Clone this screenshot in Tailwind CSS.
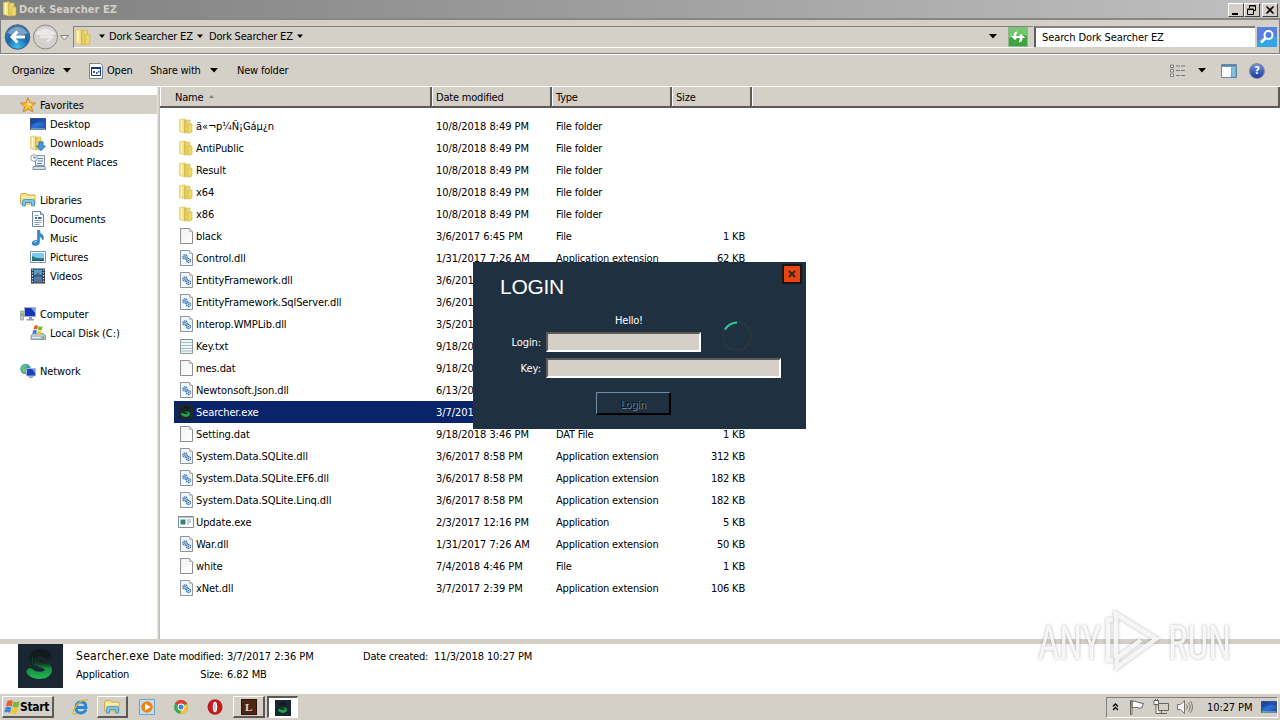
<!DOCTYPE html>
<html lang="en">

<head>
    <meta charset="UTF-8">
    <meta name="viewport" content="width=device-width, initial-scale=1.0">
    <script src="https://cdn.jsdelivr.net/npm/@tailwindcss/browser@4"></script>
    <title>Dork Searcher EZ</title>
</head>

<body class="relative w-[1280px] h-[720px] overflow-hidden bg-[#d4d0c8] font-['DejaVu_Sans_Condensed','DejaVu_Sans',sans-serif] font-stretch-condensed text-[11px] leading-[14px] tracking-[-0.2px] text-black flex flex-col whitespace-nowrap">

    <!-- Icons -->
    <svg class="absolute w-0 h-0">
        <defs>
            <linearGradient id="gold" x1="0" x2="1">
                <stop offset="0" stop-color="#f8eda0" />
                <stop offset=".5" stop-color="#dfc252" />
                <stop offset=".6" stop-color="#f6e68a" />
                <stop offset="1" stop-color="#e3c850" />
            </linearGradient>
            <linearGradient id="blue" x1="0" y1="0" x2="1" y2="1">
                <stop offset="0" stop-color="#153f9c" />
                <stop offset=".5" stop-color="#2f74d8" />
                <stop offset="1" stop-color="#1b4ca4" />
            </linearGradient>
            <linearGradient id="page" x1="0" y1="0" x2="1" y2="1">
                <stop offset="0" stop-color="#f1f1f1" />
                <stop offset="1" stop-color="#fff" />
            </linearGradient>
            <radialGradient id="back" cx=".5" cy=".9" r=".9">
                <stop offset="0" stop-color="#3fc0ee" />
                <stop offset=".5" stop-color="#1768ad" />
                <stop offset="1" stop-color="#4a7ba8" />
            </radialGradient>
            <linearGradient id="glow" gradientUnits="userSpaceOnUse" x1="0" y1="8" x2="0" y2="36">
                <stop offset="0" stop-color="#10181d" />
                <stop offset=".4" stop-color="#13241f" />
                <stop offset=".62" stop-color="#178a40" />
                <stop offset="1" stop-color="#20b850" />
            </linearGradient>
        </defs>
        <symbol id="folder" viewBox="0 0 16 16">
            <path d="M1.500 1.500 7 .8V15l-5.500-1.500z" fill="#f3e38a" stroke="#d9c56b" stroke-width=".6" />
            <path d="M6.500 2H12v12.500L6.500 15z" fill="url(#gold)" stroke="#d0b850" stroke-width=".6" />
            <path d="M10 6h4v8l-3 1.200-1-.7z" fill="#efd866" stroke="#cfb646" stroke-width=".6" />
            <path d="M7 2v12.500" stroke="#c1a440" stroke-width=".8" />
            <path d="M3.500 2.500v10" stroke="#fffbd8" />
        </symbol>
        <symbol id="file" viewBox="0 0 16 16">
            <path d="M2.500.5h9l3 3v12h-12z" fill="url(#page)" stroke="#8f8f8f" />
            <path d="M11.500.5v3h3" fill="#ddd" stroke="#aaa" stroke-width=".8" />
        </symbol>
        <symbol id="dll" viewBox="0 0 16 16">
            <path d="M2.500.5h9l3 3v12h-12z" fill="#f1f7fb" stroke="#8f9499" />
            <path d="M11.500.5v3h3" fill="#dde" stroke="#aab" stroke-width=".8" />
            <circle cx="7" cy="7" r="2.200" fill="#c3daf0" stroke="#3f74b0" stroke-width="1.300" stroke-dasharray="1.400 .6" />
            <circle cx="7" cy="7" r=".7" fill="#20508c" />
            <circle cx="10.500" cy="10.500" r="2" fill="#dcebf8" stroke="#3f74b0" stroke-width="1.300" stroke-dasharray="1.400 .5" />
            <circle cx="10.500" cy="10.500" r=".6" fill="#20508c" />
        </symbol>
        <symbol id="txt" viewBox="0 0 16 16">
            <path d="M2.500 1.500h12v14h-12z" fill="#eff5f6" stroke="#8f9a9a" />
            <path d="M3 4.500h11M3 7.500h11M3 10.500h11M3 13h11" stroke="#a3bfc5" />
            <path d="M3 1.500h11" stroke="#777" stroke-dasharray="1 1" />
        </symbol>
        <symbol id="exe" viewBox="0 0 16 16">
            <path d="M.5 2.500h15v11H.5z" fill="#fff" stroke="#7e8c93" />
            <path d="M1 3.500h14" stroke="#b6c4cc" />
            <path d="M2.500 5.500h5v5h-5z" fill="#2f8a74" />
            <path d="M9 6h4M9 8h4M9 10h2" stroke="#8fa2b8" />
        </symbol>
        <symbol id="logo" viewBox="0 0 46 46">
            <rect width="46" height="46" fill="#1a2733" />
            <path d="M30.500 12.500C27 8 15 8 15 14.500 15 21 31 19.500 31 27c0 7-14 7.500-18.500 2" fill="none" stroke="url(#glow)" stroke-width="7.500" stroke-linecap="round" />
            <path d="M15 14v6M18 15v6M21 16v5M24 18v4" stroke="#1c4a30" stroke-width=".8" />
        </symbol>
        <symbol id="star" viewBox="0 0 16 16">
            <path d="M8 .7l2.100 5 5.400.4-4.100 3.500 1.300 5.300L8 12l-4.700 2.900 1.300-5.300L.5 6.100l5.400-.4z" fill="#fbbf30" stroke="#cd8524" />
            <path d="M8 3l1.300 3.600 3 .3L8 9z" fill="#fff09a" />
        </symbol>
        <symbol id="desktop" viewBox="0 0 16 16">
            <path d="M.5 2.500h15v11H.5z" fill="url(#blue)" stroke="#36507c" />
            <path d="M1 9Q7 5 15 7V3H1z" fill="#173f97" opacity=".6" />
            <path d="M1 13h14" stroke="#a9bfd9" />
            <path d="M1 13h3" stroke="#42bd58" />
        </symbol>
        <symbol id="downloads" viewBox="0 0 16 16">
            <use href="#folder" x="-1" width="16" height="16" />
            <path d="M9 7h4v4h2.500L11 15.700 6.500 11H9z" fill="#3f9ce2" stroke="#1d6bb5" stroke-width=".8" />
        </symbol>
        <symbol id="recent" viewBox="0 0 16 16">
            <path d="M5.500 1.500h9v10h-9z" fill="#e8eef2" stroke="#7f93a3" />
            <path d="M3 12.500h12l.5 3H3z" fill="#d5e0e8" stroke="#7f93a3" />
            <path d="M8 4.500h5M8 7h5M7 9.500h5" stroke="#5888ac" />
            <circle cx="4" cy="4" r="3.300" fill="#fff" stroke="#8da0ad" />
            <path d="M4 2v2h2" fill="none" stroke="#456" stroke-width=".8" />
        </symbol>
        <symbol id="libraries" viewBox="0 0 16 16">
            <path d="M.5 3l1-1.500h5L8 3h7v9H.5z" fill="#f5e28a" stroke="#c9ab47" />
            <path d="M1 5h14" stroke="#fff7c4" />
            <path d="M2.500 14V9.500q0-2 2-2h8q2 0 2 2V14h-3v-3.500h-6V14z" fill="#7cc4ec" stroke="#3f8bbb" stroke-width=".8" />
        </symbol>
        <symbol id="documents" viewBox="0 0 16 16">
            <path d="M2.500.5h8l3 3v12h-11z" fill="#fff" stroke="#6d87a1" />
            <path d="M10.500.5v3h3" fill="#cde" stroke="#6d87a1" />
            <path d="M4.500 4.500h4M4.500 9.500h7M4.500 11.500h7M4.500 13.500h5" stroke="#89a1bd" />
            <path d="M5 6h2v2H5zM8 6h3.500v2H8z" fill="#2f6ab0" />
        </symbol>
        <symbol id="music" viewBox="0 0 16 16">
            <path d="M7.500 0h2q0 3 2.500 4.500T13 10q-1-3-3.500-3.500V12q0 3.500-4 3.500-3.500 0-3.500-2.500t5.500-3z" fill="#338fd4" stroke="#2269ab" stroke-width=".5" />
            <path d="M4 12.500q1-1.300 3-1.200" stroke="#a7dbfa" fill="none" />
        </symbol>
        <symbol id="pictures" viewBox="0 0 16 16">
            <path d="M.5 2.500h15v11H.5z" fill="#fff" stroke="#7e93a5" />
            <path d="M2 4h12v8H2z" fill="#7cc8f0" />
            <path d="M2 7q5 3 12 2v3H2z" fill="#257a7c" />
            <path d="M2 11h12v1H2z" fill="#1c4f7c" />
        </symbol>
        <symbol id="videos" viewBox="0 0 16 16">
            <path d="M1 .5h14v15H1z" fill="#2d3a45" />
            <path d="M4 1.500h8v5.800H4z" fill="#4aa0d8" />
            <path d="M4 8.300h8v6.200H4z" fill="#417fc0" />
            <path d="M5 7l3-3 3 3zM5 14l2-4 4 4z" fill="#7c6a62" />
            <path d="M2.500 1.500v14M13.500 1.500v14" stroke="#dde6ec" stroke-width="1.300" stroke-dasharray="1.300 1.500" />
        </symbol>
        <symbol id="computer" viewBox="0 0 16 16">
            <path d="M.5 5h3v9h-3z" fill="#c5ccd0" stroke="#83909a" stroke-width=".7" />
            <path d="M1 7h2v3H1z" fill="#6bbf58" />
            <path d="M4.500 1.500h11v9h-11z" fill="#1834bb" stroke="#a7b2c4" />
            <path d="M11 2h4v5z" fill="#7e9af0" />
            <path d="M9 11h3v2h2v1.500H6.500V13H9z" fill="#8e9cac" />
        </symbol>
        <symbol id="winflag" viewBox="0 0 16 16">
            <path d="M3.500 2Q6 .5 8.800 2L7.600 7.400Q5 6 2 7.300z" fill="#ee5a24" />
            <path d="M9.600 2.500q2.600 1.300 6 0l-1.400 5.400Q11.200 9 8.400 7.800z" fill="#72b836" />
            <path d="M1.700 8.300Q4.500 7.200 7.300 8.400L6 13.700Q3 12.300.2 13.600z" fill="#3d86db" />
            <path d="M8.200 8.800q2.800 1.200 5.700.2l-1.400 5.200Q9.700 15.300 6.900 14.100z" fill="#fac421" />
        </symbol>
        <symbol id="disk" viewBox="0 0 16 16">
            <path d="M1 10.500l2-2h10l2.500 2v4H1z" fill="#b8c7cf" stroke="#748a96" stroke-width=".8" />
            <path d="M2 12.500h8" stroke="#e4ecef" />
            <path d="M12 12.500h2" stroke="#38a94a" stroke-width="1.500" />
            <use href="#winflag" x="2" y="-.5" width="11" height="11" />
        </symbol>
        <symbol id="network" viewBox="0 0 16 16">
            <circle cx="5.500" cy="6" r="5.200" fill="#3496cb" />
            <path d="M2 3q4-3 6-1L5 5l2 3-3 3Q1 8 1 5z" fill="#68c077" />
            <path d="M6.500 5.500h9v7.500h-9z" fill="#1c3fc6" stroke="#a9b9d0" />
            <path d="M12 6h3v4z" fill="#7e9af0" />
            <path d="M9 13.500h4v1.500H9z" fill="#8798aa" />
        </symbol>
    </svg>

    <!-- Title bar -->
    <header class="h-[18px] shrink-0 flex items-center pl-0.5 pr-0.5 bg-linear-to-r from-[#808080] to-[#c0c0c0]">
        <svg class="size-4 mr-px"><use href="#folder" /></svg>
        <span class="font-bold text-[#d4d0c8] tracking-[0.05px] pt-px">Dork Searcher EZ</span>
        <div class="ml-auto flex mt-px">
            <div class="w-4 h-[14px] bg-[#d4d0c8] border border-t-white border-l-white border-b-[#404040] border-r-[#404040]">
                <svg viewBox="0 0 14 12" class="w-3.5 h-3"><path d="M3 9h6v2H3z" /></svg>
            </div>
            <div class="w-4 h-[14px] bg-[#d4d0c8] border border-t-white border-l-white border-b-[#404040] border-r-[#404040] mr-0.5">
                <svg viewBox="0 0 14 12" class="w-3.5 h-3" fill="none" stroke="#000"><path d="M4.500 4V1.500h6v5H9M4.500 2h6M2.500 5h6v5.500h-6zM2.500 5.500h6" /></svg>
            </div>
            <div class="w-4 h-[14px] bg-[#d4d0c8] border border-t-white border-l-white border-b-[#404040] border-r-[#404040]">
                <svg viewBox="0 0 14 12" class="w-3.5 h-3" stroke="#000" stroke-width="1.600"><path d="M3.500 2.500l7 7M10.500 2.500l-7 7" /></svg>
            </div>
        </div>
    </header>

    <!-- Address bar -->
    <nav class="h-[36px] shrink-0 flex items-center border-t-2 border-t-[#8a8781] border-b border-b-[#808080] border-l border-l-[#808080] border-r border-r-[#808080] pl-[3px]">
        <svg class="w-[66px] h-[28px] shrink-0" viewBox="0 0 66 28">
            <circle cx="13.500" cy="14" r="12.300" fill="url(#back)" stroke="#4c6477" />
            <path d="M3 10Q13-2 24 10q-10 5-21 0z" fill="#fff" opacity=".35" />
            <path d="M13.500 8.500L8 14l5.500 5.500M8.500 14H21" fill="none" stroke="#fff" stroke-width="3" />
            <circle cx="41.500" cy="14" r="12" fill="#d3d1ce" stroke="#8b8985" />
            <path d="M31 11Q41 0 52 11q-10 4-21 0z" fill="#fff" opacity=".5" />
            <path d="M43 9l5 5-5 5M36 14h11" fill="none" stroke="#e8e6e3" stroke-width="2.500" />
            <path d="M56.500 12.500h8L60.500 17z" fill="#eee" stroke="#88857f" />
        </svg>
        <div class="ml-[3px] w-[960px] h-[22px] flex items-center border-t border-l border-[#808080] border-b border-b-white">
            <svg class="size-[18px] mr-1"><use href="#folder" /></svg>
            <svg class="w-2 h-[5px] mx-0.5" viewBox="0 0 8 5"><path d="M1 .5h6L4 4z" /></svg>
            <span class="w-[84px] ml-px">Dork Searcher EZ</span>
            <svg class="w-2 h-[5px] mx-[3px]" viewBox="0 0 8 5"><path d="M1 .5h6L4 4z" /></svg>
            <span class="w-[84px] ml-[2px]">Dork Searcher EZ</span>
            <svg class="w-2 h-[5px] mx-[3px]" viewBox="0 0 8 5"><path d="M1 .5h6L4 4z" /></svg>
            <svg class="ml-auto mr-[36px] w-2 h-[5px]" viewBox="0 0 8 5"><path d="M0 0h8L4 4.500z" /></svg>
        </div>
        <svg class="ml-[-25px] w-5 h-5" viewBox="0 0 20 20">
            <path d="M.5.500h19v19H.5z" fill="#3da442" stroke="#8fb98c" />
            <path d="M1 1h18v8Q10 6 1 11z" fill="#8bd57f" opacity=".7" />
            <path d="M9 4.500Q5.500 5 5.500 9H2.700L7 13l4-4H8.300Q8 7 9 6zM11 15.500Q14.500 15 14.500 11h2.800L13 7 9 11h2.700q.3 2-.7 3z" fill="#fff" />
        </svg>
        <div class="ml-1.5 w-[221px] h-[21px] bg-white border-t-2 border-l-2 border-t-[#808080] border-l-[#606060] flex items-center pl-1.5 tracking-[-0.1px]">Search Dork Searcher EZ</div>
        <svg class="ml-[2px] w-5 h-5" viewBox="0 0 20 20">
            <rect width="20" height="20" rx="1" fill="#4d83dd" />
            <path d="M0 10h20v10H0z" fill="#35a5e8" />
            <path d="M0 0h20v6Q10 9 0 14z" fill="#5a7fe0" />
            <circle cx="11.500" cy="8" r="4" fill="#4a7fe0" stroke="#fff" stroke-width="2" />
            <path d="M8.500 11L4 15.500" stroke="#fff" stroke-width="2.600" />
        </svg>
    </nav>

    <!-- Toolbar -->
    <div class="h-[32px] shrink-0 flex items-center border-t border-t-white pl-3 pr-[15px]">
        <span class="w-[43px]">Organize</span>
        <svg class="ml-2 w-2 h-[5px]" viewBox="0 0 8 5"><path d="M0 0h8L4 4.500z" /></svg>
        <svg class="ml-[17px] mr-[3px] w-4 h-4" viewBox="0 0 16 16">
            <path d="M1.500.5h11l2 2v13h-13z" fill="#fff" stroke="#7b8793" />
            <path d="M3.500 4.500h9v8h-9z" fill="#fff" stroke="#123a8c" />
            <path d="M3 5h10" stroke="#123a8c" stroke-width="2" />
            <path d="M5 8h2v2H5zM8 9h1.500v2H8zM10 8h1.500v1.500H10z" fill="#31599c" />
        </svg>
        <span class="w-[27px]">Open</span>
        <span class="ml-4 w-[52px]">Share with</span>
        <svg class="ml-2 w-2 h-[5px]" viewBox="0 0 8 5"><path d="M0 0h8L4 4.500z" /></svg>
        <span class="ml-[19px]">New folder</span>
        <svg class="ml-auto w-4 h-[14px]" viewBox="0 0 16 14" fill="none">
            <path d="M.5 1h3v2.500h-3zM.5 5.500h3V8h-3zM.5 10h3v2.500h-3z" fill="#fff" stroke="#777" />
            <path d="M6 2h4M11 2h4M6 6.500h4M11 6.500h4M6 11.500h4M11 11.500h4" stroke="#6c7a88" />
        </svg>
        <svg class="ml-3 w-2 h-[5px]" viewBox="0 0 8 5"><path d="M0 0h8L4 4.500z" /></svg>
        <svg class="ml-[15px] w-4 h-[14px]" viewBox="0 0 17 15">
            <path d="M.5.500h16v14H.5z" fill="#fff" stroke="#5c7c9c" />
            <path d="M1 2h15" stroke="#4f83b0" stroke-width="2" />
            <path d="M11 4h5v10h-5z" fill="#85c3e2" stroke="#4f83b0" stroke-width=".7" />
        </svg>
        <div class="ml-3 size-4 rounded-full bg-linear-to-b from-[#6d8fdb] to-[#1c3a9e] border border-[#7e8aa0] text-white leading-[14px] font-bold text-center tracking-normal">?</div>
    </div>

    <main class="h-[553px] shrink-0 flex border-t border-t-white">
        <!-- Navigation pane -->
        <aside id="tree" class="w-[157px] bg-white pt-2 shrink-0"></aside>
        <div class="w-[3px] shrink-0 border-l border-l-[#e4e2dc] border-r border-r-[#c0bdb6]"></div>

        <!-- File list -->
        <section class="grow bg-white">
            <div class="h-[21px] flex items-center bg-[#d4d0c8] border-b-2 border-b-[#5c5a56] *:h-[19px] *:leading-[22px] *:border-r-2 *:border-r-[#5c5a56] *:border-l *:border-l-white">
                <div class="w-[272px] pl-3.5 flex">Name<svg class="ml-1.5 mt-2 w-[5px] h-[3px]" viewBox="0 0 5 3"><path d="M0 3h5L2.500 0z" fill="#85827c" /></svg></div>
                <div class="w-[120px] pl-[3px]">Date modified</div>
                <div class="w-[120px] pl-[3px]">Type</div>
                <div class="w-[80px] pl-[3px]">Size</div>
                <div class="grow"></div>
            </div>
            <div id="files" class="pt-[7px] pl-3.5"></div>
        </section>
    </main>

    <!-- Details pane -->
    <section class="h-[54px] shrink-0 bg-white border-t-[5px] border-t-[#d4d0c8] flex pl-[18px]">
        <svg class="w-[45px] h-[44px] mr-[13px]" viewBox="0 0 46 46" preserveAspectRatio="none"><use href="#logo" /></svg>
        <div class="w-[77px] pt-[4px]">
            <div class="text-[12px] leading-[17px] tracking-[0.3px]">Searcher.exe</div>
            <div class="mt-0.5 leading-[16px]">Application</div>
        </div>
        <div class="pt-[4px] w-[210px] leading-[17px] grid grid-cols-[70px_1fr] gap-x-[4px] gap-y-[1px] content-start">
            <div class="text-right">Date modified:</div>
            <div class="tracking-[-0.05px]">3/7/2017 2:36 PM</div>
            <div class="text-right">Size:</div>
            <div class="tracking-[-0.1px]">6.82 MB</div>
        </div>
        <div class="pt-[4px] leading-[17px] flex gap-[5px]">
            <div class="w-[66px]">Date created:</div>
            <div class="tracking-[-0.1px]">11/3/2018 10:27 PM</div>
        </div>
    </section>

    <!-- Taskbar -->
    <footer class="grow flex items-center border-t border-t-white pl-0.5 pr-0.5">
        <div class="w-[52px] h-[22px] flex items-center pl-px bg-[#d4d0c8] border border-t-white border-l-white border-b-2 border-r-2 border-b-[#5c5a56] border-r-[#5c5a56]">
            <svg class="w-4 h-4"><use href="#winflag" /></svg>
            <span class="font-bold text-[12px] tracking-[-0.3px]">Start</span>
        </div>
        <div class="w-[42px] ml-1 flex justify-center">
            <svg class="w-[18px] h-4 ml-1" viewBox="0 0 18 16" fill="none">
                <path d="M14 10.500q-1.500 3.500-5 3.500-5 0-5-5.500t5-5.500q5 0 5 5.500H5" stroke="#2487d8" stroke-width="2.800" />
                <path d="M16 1q-6-1-11 5T1.500 15q1.500 1 4-.5" stroke="#e5b62d" stroke-width="1.400" />
            </svg>
        </div>
        <div class="ml-[-3px] w-[31px] h-[22px] flex items-center justify-center border border-t-white border-l-white border-b-2 border-r-2 border-b-[#5c5a56] border-r-[#5c5a56]">
            <svg class="size-4"><use href="#libraries" /></svg>
        </div>
        <svg class="ml-[11px] w-4 h-4" viewBox="0 0 16 16">
            <path d="M.5.500h15v15H.5z" fill="#bfe0f7" stroke="#6ba5cf" />
            <circle cx="8" cy="8" r="5.800" fill="#ef8415" />
            <path d="M6 4.500L11.500 8 6 11.500z" fill="#fff" />
        </svg>
        <svg class="ml-[19px] w-[14px] h-[14px]" viewBox="0 0 14 14">
            <circle cx="7" cy="7" r="7" fill="#3da853" />
            <path d="M7 7L1 3.500A7 7 0 0 1 13.300 4H7z" fill="#e0402f" />
            <path d="M7 7l6.200-3A7 7 0 0 1 6.500 14z" fill="#fbc824" />
            <circle cx="7" cy="7" r="3.400" fill="#fff" />
            <circle cx="7" cy="7" r="2.500" fill="#3f7fe2" />
        </svg>
        <svg class="ml-[19px] w-4 h-4" viewBox="0 0 16 16">
            <ellipse cx="8" cy="8" rx="7.500" ry="7.800" fill="#c41b1d" />
            <ellipse cx="8" cy="8" rx="2.200" ry="5.300" fill="#fff" />
            <ellipse cx="8" cy="8" rx=".8" ry="4" fill="#c9b3b3" />
        </svg>
        <div class="ml-[10px] w-[32px] h-[22px] flex items-center justify-center border border-t-white border-l-white border-b-2 border-r-2 border-b-[#5c5a56] border-r-[#5c5a56]">
            <div class="size-4 bg-[#4e2616] border border-[#2c150c] text-[#e9d6c0] text-[11px] leading-[14px] font-bold text-center font-['Liberation_Serif',serif]">L</div>
        </div>
        <div class="ml-[2px] w-[31px] h-[22px] bg-white flex items-center justify-center border-t-2 border-l-2 border-b border-r border-t-[#5c5a56] border-l-[#5c5a56] border-b-white border-r-white">
            <svg class="size-4" viewBox="0 0 46 46"><use href="#logo" /></svg>
        </div>
        <div class="ml-auto w-[172px] h-[21px] flex items-center border border-t-[#808080] border-l-[#808080] border-b-white border-r-white pl-[5px]">
            <svg class="w-[7px] h-[8px]" viewBox="0 0 7 8" fill="none" stroke="#000" stroke-width="1.300"><path d="M1 3.500L3.500 1 6 3.500M1 7l2.500-2.500L6 7" /></svg>
            <svg class="ml-[10px] w-4 h-4" viewBox="0 0 16 16" fill="#fff" stroke="#66635e">
                <path d="M1.500 1.500h1.500v14H1.500zM3 2.500q3-1 5 .5 3 1 6.500 1.500L12.500 9Q10 9.500 8 8.500 6 8 3 9z" />
            </svg>
            <svg class="ml-[8px] w-4 h-4" viewBox="0 0 16 16" fill="#fff" stroke="#66635e">
                <path d="M5.500 4.500h10v7h-10z" fill="#d4d0c8" />
                <path d="M8.500 12v2M6 14.500h8M1 1.500h4.500v4H1zM3 5.500v9h3M2.500 0v2M4.500 0v2" />
            </svg>
            <svg class="ml-[8px] w-4 h-4" viewBox="0 0 16 16" fill="none" stroke="#77746e">
                <path d="M.5 5.500h3l4-4v13l-4-4h-3z" fill="#fff" />
                <path d="M9.500 5.500q2 2.500 0 5M11.500 3.500q3.500 4.500 0 9M13.500 2q4 6 0 12" />
            </svg>
            <span class="ml-[14px] w-[46px] tracking-[-0.1px] pt-px">10:27 PM</span>
            <svg class="ml-[8px] w-4 h-4"><use href="#desktop" /></svg>
        </div>
    </footer>

    <!-- Login window -->
    <div class="absolute left-[473px] top-[262px] w-[333px] h-[167px] bg-[#1f3140] text-white flex flex-col">
        <div class="h-[46px] flex justify-between pl-[27px] pr-1 pt-0.5">
            <h1 class="font-['Liberation_Sans',sans-serif] text-[21px] leading-[46px] tracking-[-0.3px]">LOGIN</h1>
            <div class="w-5 h-5 bg-[#e8450e] border-2 border-[#1b1412] flex items-center justify-center">
                <svg class="size-2" viewBox="0 0 8 8" stroke="#35271f" stroke-width="2"><path d="M1 1l6 6M7 1L1 7" /></svg>
            </div>
        </div>
        <div class="pl-[142px] mt-[6px]">Hello!</div>
        <div class="relative flex items-center mt-1 h-5">
            <label class="w-[68px] mr-[5px] text-right pt-px tracking-[-0.1px]">Login:</label>
            <div class="w-[155px] h-5 bg-[#d4d0c8] border-2 border-t-[#5c5a56] border-l-[#5c5a56] border-b-white border-r-white"></div>
            <svg class="absolute left-[248px] top-[-12px] w-8 h-8" viewBox="0 0 32 32" fill="none">
                <circle cx="16" cy="16" r="14" stroke="#33363a" stroke-width="1.600" stroke-dasharray="3 1" />
                <path d="M4 9.500Q8 3 16 2.500" stroke="#2bd0a0" stroke-width="2.200" />
            </svg>
        </div>
        <div class="flex items-center mt-1.5 h-5">
            <label class="w-[68px] mr-[5px] text-right pt-px tracking-normal">Key:</label>
            <div class="w-[235px] h-5 bg-[#d4d0c8] border-2 border-t-[#5c5a56] border-l-[#5c5a56] border-b-white border-r-white"></div>
        </div>
        <div class="ml-[123px] mt-[14px] w-[75px] h-[23px] border border-t-[#6f8ca5] border-l-[#6f8ca5] border-b-2 border-r-2 border-b-black border-r-black text-center leading-[23px] text-[#0c151d] text-shadow-[1px_1px_0_#6f8ca5]">Login</div>
    </div>

    <!-- Watermark -->
    <svg class="absolute left-[1030px] top-[602px] w-[210px] h-[74px] drop-shadow-[0_0_1.5px_rgba(0,0,0,0.35)]" viewBox="0 0 210 74">
        <g fill="#fff" fill-opacity=".85" font-family="Roboto, sans-serif" font-size="49">
            <text x="8" y="57" textLength="63" lengthAdjust="spacingAndGlyphs">ANY</text>
            <text x="138" y="57" textLength="63" lengthAdjust="spacingAndGlyphs">RUN</text>
        </g>
        <path d="M83 18h-5v40h5M86 56V12l40 25-39 28V56l24-18" fill="none" stroke="#fff" stroke-opacity=".85" stroke-width="4.500" />
    </svg>

    <script>
        const tree = [
            ['star', 'Favorites', 0],
            ['desktop', 'Desktop', 1],
            ['downloads', 'Downloads', 1],
            ['recent', 'Recent Places', 1],
            null,
            ['libraries', 'Libraries', 0],
            ['documents', 'Documents', 1],
            ['music', 'Music', 1],
            ['pictures', 'Pictures', 1],
            ['videos', 'Videos', 1],
            null,
            ['computer', 'Computer', 0],
            ['disk', 'Local Disk (C:)', 1],
            null,
            ['network', 'Network', 0],
        ];

        // rows behind the login window keep only what can be seen around it
        const files = [
            ['folder', 'ä«¬p¼Ñ¡Gáµ¿n', '10/8/2018 8:49 PM', 'File folder', ''],
            ['folder', 'AntiPublic', '10/8/2018 8:49 PM', 'File folder', ''],
            ['folder', 'Result', '10/8/2018 8:49 PM', 'File folder', ''],
            ['folder', 'x64', '10/8/2018 8:49 PM', 'File folder', ''],
            ['folder', 'x86', '10/8/2018 8:49 PM', 'File folder', ''],
            ['file', 'black', '3/6/2017 6:45 PM', 'File', '1 KB'],
            ['dll', 'Control.dll', '1/31/2017 7:26 AM', 'Application extension', '62 KB'],
            ['dll', 'EntityFramework.dll', '3/6/201', '', ''],
            ['dll', 'EntityFramework.SqlServer.dll', '3/6/201', '', ''],
            ['dll', 'Interop.WMPLib.dll', '3/5/201', '', ''],
            ['txt', 'Key.txt', '9/18/20', '', ''],
            ['file', 'mes.dat', '9/18/20', '', ''],
            ['dll', 'Newtonsoft.Json.dll', '6/13/20', '', ''],
            ['logo', 'Searcher.exe', '3/7/201', '', ''],
            ['file', 'Setting.dat', '9/18/2018 3:46 PM', 'DAT File', '1 KB'],
            ['dll', 'System.Data.SQLite.dll', '3/6/2017 8:58 PM', 'Application extension', '312 KB'],
            ['dll', 'System.Data.SQLite.EF6.dll', '3/6/2017 8:58 PM', 'Application extension', '182 KB'],
            ['dll', 'System.Data.SQLite.Linq.dll', '3/6/2017 8:58 PM', 'Application extension', '182 KB'],
            ['exe', 'Update.exe', '2/3/2017 12:16 PM', 'Application', '5 KB'],
            ['dll', 'War.dll', '1/31/2017 7:26 AM', 'Application extension', '50 KB'],
            ['file', 'white', '7/4/2018 4:46 PM', 'File', '1 KB'],
            ['dll', 'xNet.dll', '3/7/2017 2:39 PM', 'Application extension', '106 KB'],
        ];

        document.getElementById('tree').innerHTML = tree.map((item, i) => {
            if (!item) return '<div class="h-[19px]"></div>';
            const [icon, name, level] = item;
            return `
                <div class="h-[19px] flex items-center ${level ? 'pl-[30px]' : 'pl-5'} ${i === 0 ? 'bg-[#d4d0c8]' : ''}">
                    <svg class="size-4 mr-1"><use href="#${icon}" /></svg>
                    <span class="pt-0.5 tracking-[-0.1px]">${name}</span>
                </div>`;
        }).join('');

        document.getElementById('files').innerHTML = files.map(([icon, name, date, type, size]) => `
            <div class="w-[578px] h-[22px] flex items-center pl-1 *:pt-0.5 ${icon === 'logo' ? 'bg-[#0a246a] text-white' : ''}">
                <svg class="w-4 h-[18px] mr-0.5 mb-0.5"><use href="#${icon}" /></svg>
                <span class="w-[240px] tracking-[-0.1px]">${name}</span>
                <span class="w-[120px] tracking-[-0.05px]">${date}</span>
                <span class="w-[120px]">${type}</span>
                <span class="w-[69px] text-right">${size}</span>
            </div>`).join('');
    </script>
</body>

</html>
